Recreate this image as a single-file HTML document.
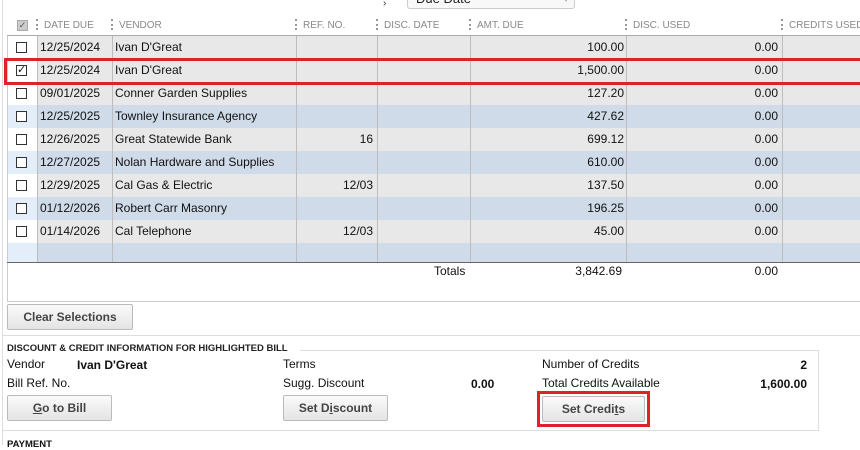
<!DOCTYPE html>
<html><head><style>
*{margin:0;padding:0;box-sizing:border-box}
body{width:860px;height:445px;overflow:hidden;background:#fff;font-family:"Liberation Sans",Arial,sans-serif;font-size:12px;color:#111;position:relative}
.a{position:absolute;white-space:nowrap}
.hd{position:absolute;top:16px;height:20px;font-size:10px;color:#888;line-height:20px;white-space:nowrap}
.dots{position:absolute;top:19px;width:0;height:11px;border-left:2px dotted #999}
.row{position:absolute;left:8px;width:852px;height:23px}
.c{position:absolute;top:0;height:23px;line-height:23px;white-space:nowrap}
.r{text-align:right}
.cb{position:absolute;left:8px;top:6px;width:11px;height:11px;border:1px solid #333;background:#fff}
.vl{position:absolute;top:36px;height:226px;width:1px;background:#bdbdbd}
.btn{position:absolute;height:26px;border:1px solid #bbb;border-radius:2px;background:linear-gradient(#fafafa,#e4e4e4);font-weight:bold;color:#444;text-align:center;line-height:24px;font-size:12px}
</style></head><body>
<div class="a" style="left:2px;top:0;width:1px;height:445px;background:#ddd"></div>
<div class="a" style="left:383px;top:-2px;font-size:10px;color:#333">›</div>
<div class="a" style="left:407px;top:-8px;width:168px;height:17px;border:1px solid #ccc;border-radius:3px;background:#f8f8f8;font-size:13px;line-height:12px;padding-left:8px;color:#222;overflow:hidden">Due Date<span style="position:absolute;right:6px;top:1px;font-size:8px;color:#999">▾</span></div>
<!-- header -->
<div class="a" style="left:17px;top:20px;width:11px;height:11px;background:#ccc;border:1px solid #aaa;font-size:9px;line-height:9px;text-align:center;color:#555">✓</div>
<div class="dots" style="left:36px"></div><div class="hd" style="left:44px">DATE DUE</div>
<div class="dots" style="left:111px"></div><div class="hd" style="left:119px">VENDOR</div>
<div class="dots" style="left:295px"></div><div class="hd" style="left:303px">REF. NO.</div>
<div class="dots" style="left:376px"></div><div class="hd" style="left:384px">DISC. DATE</div>
<div class="dots" style="left:469px"></div><div class="hd" style="left:477px">AMT. DUE</div>
<div class="dots" style="left:625px"></div><div class="hd" style="left:633px">DISC. USED</div>
<div class="dots" style="left:781px"></div><div class="hd" style="left:789px">CREDITS USED</div>
<div class="a" style="left:7px;top:35px;width:853px;height:1px;background:#aaa"></div>
<div class="a" style="left:7px;top:36px;width:1px;height:266px;background:#ccc"></div>

<div class="row" style="top:36px;background:#e8e8e8"><div class="a" style="left:0;width:29px;height:23px;background:#fff"></div><div class="cb"></div><div class="c" style="left:32px">12/25/2024</div><div class="c" style="left:107px">Ivan D'Great</div><div class="c r" style="left:462px;width:154px">100.00</div><div class="c r" style="left:618px;width:152px">0.00</div></div>
<div class="row" style="top:59px;background:#e8e8e8"><div class="a" style="left:0;width:29px;height:23px;background:#fff"></div><div class="cb" style="font-size:11px;line-height:9px;text-align:center">✓</div><div class="c" style="left:32px">12/25/2024</div><div class="c" style="left:107px">Ivan D'Great</div><div class="c r" style="left:462px;width:154px">1,500.00</div><div class="c r" style="left:618px;width:152px">0.00</div></div>
<div class="row" style="top:82px;background:#e8e8e8"><div class="a" style="left:0;width:29px;height:23px;background:#fff"></div><div class="cb"></div><div class="c" style="left:32px">09/01/2025</div><div class="c" style="left:107px">Conner Garden Supplies</div><div class="c r" style="left:462px;width:154px">127.20</div><div class="c r" style="left:618px;width:152px">0.00</div></div>
<div class="row" style="top:105px;background:#cfdbe8"><div class="a" style="left:0;width:29px;height:23px;background:#e4eefb"></div><div class="cb"></div><div class="c" style="left:32px">12/25/2025</div><div class="c" style="left:107px">Townley Insurance Agency</div><div class="c r" style="left:462px;width:154px">427.62</div><div class="c r" style="left:618px;width:152px">0.00</div></div>
<div class="row" style="top:128px;background:#e8e8e8"><div class="a" style="left:0;width:29px;height:23px;background:#fff"></div><div class="cb"></div><div class="c" style="left:32px">12/26/2025</div><div class="c" style="left:107px">Great Statewide Bank</div><div class="c r" style="left:288px;width:77px">16</div><div class="c r" style="left:462px;width:154px">699.12</div><div class="c r" style="left:618px;width:152px">0.00</div></div>
<div class="row" style="top:151px;background:#cfdbe8"><div class="a" style="left:0;width:29px;height:23px;background:#e4eefb"></div><div class="cb"></div><div class="c" style="left:32px">12/27/2025</div><div class="c" style="left:107px">Nolan Hardware and Supplies</div><div class="c r" style="left:462px;width:154px">610.00</div><div class="c r" style="left:618px;width:152px">0.00</div></div>
<div class="row" style="top:174px;background:#e8e8e8"><div class="a" style="left:0;width:29px;height:23px;background:#fff"></div><div class="cb"></div><div class="c" style="left:32px">12/29/2025</div><div class="c" style="left:107px">Cal Gas &amp; Electric</div><div class="c r" style="left:288px;width:77px">12/03</div><div class="c r" style="left:462px;width:154px">137.50</div><div class="c r" style="left:618px;width:152px">0.00</div></div>
<div class="row" style="top:197px;background:#cfdbe8"><div class="a" style="left:0;width:29px;height:23px;background:#e4eefb"></div><div class="cb"></div><div class="c" style="left:32px">01/12/2026</div><div class="c" style="left:107px">Robert Carr Masonry</div><div class="c r" style="left:462px;width:154px">196.25</div><div class="c r" style="left:618px;width:152px">0.00</div></div>
<div class="row" style="top:220px;background:#e8e8e8"><div class="a" style="left:0;width:29px;height:23px;background:#fff"></div><div class="cb"></div><div class="c" style="left:32px">01/14/2026</div><div class="c" style="left:107px">Cal Telephone</div><div class="c r" style="left:288px;width:77px">12/03</div><div class="c r" style="left:462px;width:154px">45.00</div><div class="c r" style="left:618px;width:152px">0.00</div></div>
<div class="row" style="top:243px;height:19px;background:#cfdbe8"><div class="a" style="left:0;width:29px;height:19px;background:#e4eefb"></div></div>

<div class="vl" style="left:37px"></div><div class="vl" style="left:112px"></div><div class="vl" style="left:296px"></div><div class="vl" style="left:377px"></div><div class="vl" style="left:470px"></div><div class="vl" style="left:626px"></div><div class="vl" style="left:782px"></div>
<div class="a" style="left:7px;top:262px;width:853px;height:1px;background:#666"></div>
<div class="a" style="left:434px;top:264px">Totals</div>
<div class="a r" style="left:470px;top:264px;width:152px">3,842.69</div>
<div class="a r" style="left:626px;top:264px;width:152px">0.00</div>
<div class="a" style="left:7px;top:301px;width:853px;height:1px;background:#ccc"></div>

<div class="a" style="left:4px;top:58px;width:860px;height:27px;border:3px solid #e0202a;border-right:none"></div>

<div class="btn" style="left:7px;top:304px;width:126px">Clear Selections</div>
<div class="a" style="left:2px;top:335px;width:858px;height:1px;background:#ddd"></div>
<div class="a" style="left:7px;top:343px;font-size:9.5px;font-weight:bold;color:#222">DISCOUNT &amp; CREDIT INFORMATION FOR HIGHLIGHTED BILL</div>
<div class="a" style="left:300px;top:350px;width:519px;height:1px;background:#ddd"></div>
<div class="a" style="left:818px;top:350px;width:1px;height:81px;background:#ddd"></div>
<div class="a" style="left:2px;top:430px;width:817px;height:1px;background:#ddd"></div>
<div class="a" style="left:7px;top:357px">Vendor</div>
<div class="a" style="left:77px;top:358px;font-weight:bold">Ivan D'Great</div>
<div class="a" style="left:7px;top:376px">Bill Ref. No.</div>
<div class="a" style="left:283px;top:357px">Terms</div>
<div class="a" style="left:283px;top:376px">Sugg. Discount</div>
<div class="a" style="left:471px;top:377px;font-weight:bold">0.00</div>
<div class="a" style="left:542px;top:357px">Number of Credits</div>
<div class="a" style="left:542px;top:376px">Total Credits Available</div>
<div class="a r" style="left:700px;top:358px;width:107px;font-weight:bold">2</div>
<div class="a r" style="left:700px;top:377px;width:107px;font-weight:bold">1,600.00</div>
<div class="btn" style="left:7px;top:395px;width:105px"><u>G</u>o to Bill</div>
<div class="btn" style="left:283px;top:395px;width:105px">Set D<u>i</u>scount</div>
<div class="btn" style="left:542px;top:396px;width:103px">Set Credi<u>t</u>s</div>
<div class="a" style="left:537px;top:391px;width:113px;height:36px;border:3px solid #e0202a"></div>
<div class="a" style="left:7px;top:439px;font-size:9.5px;font-weight:bold">PAYMENT</div>
</body></html>
